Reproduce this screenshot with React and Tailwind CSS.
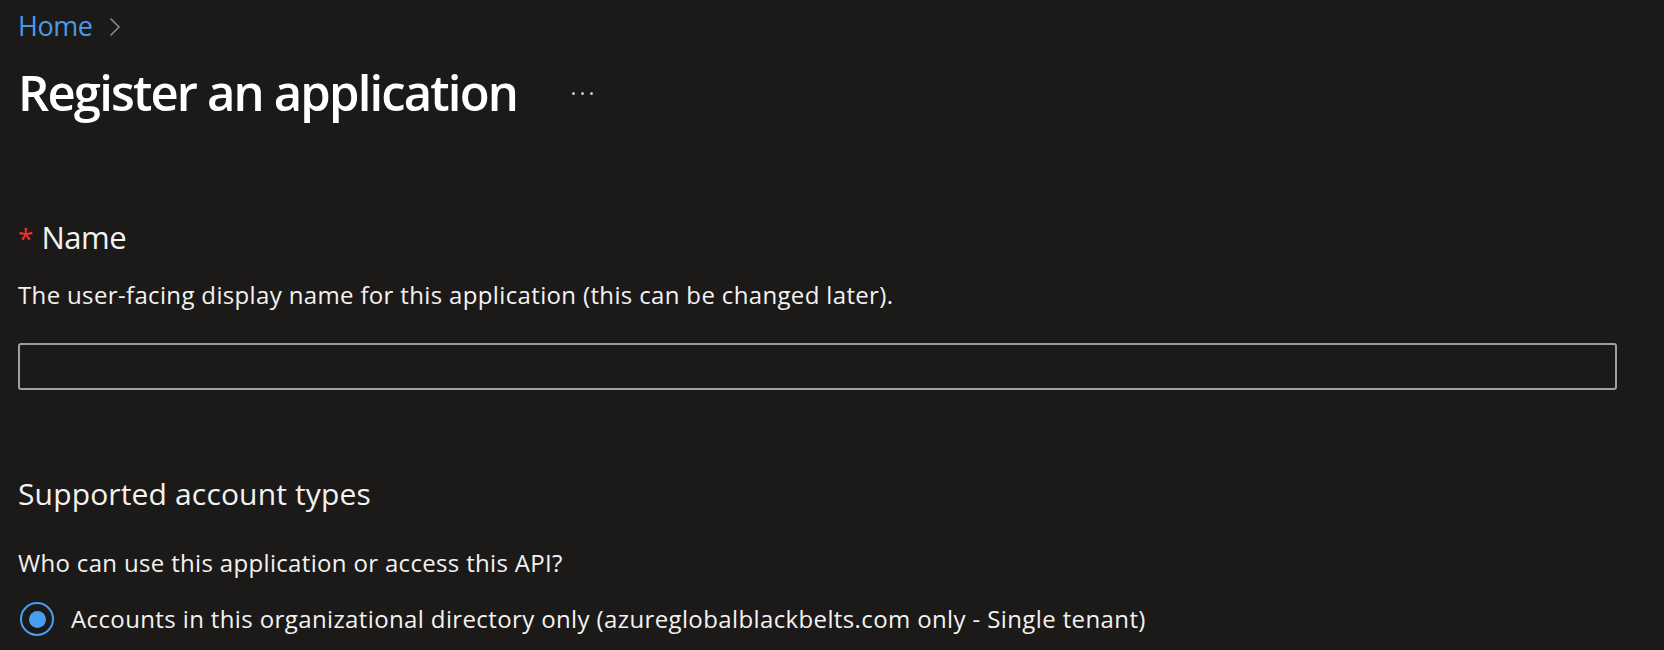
export default function App() {
  return (
    <div
      className="w-[1664px] h-[650px] overflow-hidden bg-[#1b1a19] pl-[18px] pr-[47px] text-[#f3f2f1]"
      style={{ fontFamily: '"Open Sans", "Noto Sans", sans-serif' }}
    >
      <div className="pt-[8px] flex items-center h-[44px]">
        <span className="text-[27px] leading-[36px] text-[#4b98e8] tracking-[-0.5px]">Home</span>
        <svg className="ml-[17px] mt-[2px]" width="12" height="20" viewBox="0 0 12 20" fill="none">
          <path d="M1.5 1.5 L10 10 L1.5 18.5" stroke="#8a8886" strokeWidth="1.6" />
        </svg>
      </div>
      <div className="mt-[18px] flex items-center h-[60px]">
        <h1 className="text-[49px] leading-[60px] font-semibold text-white tracking-[-1.85px]">
          Register an application
        </h1>
        <div className="ml-[55px] mt-[2px] flex gap-[6px]">
          <span className="w-[3px] h-[3px] rounded-full bg-[#c8c6c4]" />
          <span className="w-[3px] h-[3px] rounded-full bg-[#c8c6c4]" />
          <span className="w-[3px] h-[3px] rounded-full bg-[#c8c6c4]" />
        </div>
      </div>
      <div className="mt-[95px] flex items-baseline text-[31px] leading-[40px]">
        <span className="text-[#e3342f] text-[28px] mr-[8px]">*</span>
        <span className="tracking-[-0.5px]">Name</span>
      </div>
      <p className="mt-[21px] text-[24px] leading-[32px] tracking-[0.35px]">
        The user-facing display name for this application (this can be changed later).
      </p>
      <div className="mt-[32px] h-[47px] w-full rounded-[3px] border-2 border-[#a19f9d] bg-[#1b1a19]" />
      <h2 className="mt-[84px] text-[30px] leading-[40px] tracking-[0.15px]">Supported account types</h2>
      <p className="mt-[33px] text-[24px] leading-[32px] tracking-[0.33px]">
        Who can use this application or access this API?
      </p>
      <div className="mt-[23px] flex items-center">
        <div className="ml-[2px] w-[34px] h-[34px] rounded-full border-2 border-[#479ef5] flex items-center justify-center">
          <div className="w-[17px] h-[17px] rounded-full bg-[#479ef5]" />
        </div>
        <span className="ml-[17px] text-[24px] leading-[32px] tracking-[0.38px]">
          Accounts in this organizational directory only (azureglobalblackbelts.com only - Single tenant)
        </span>
      </div>
    </div>
  );
}
